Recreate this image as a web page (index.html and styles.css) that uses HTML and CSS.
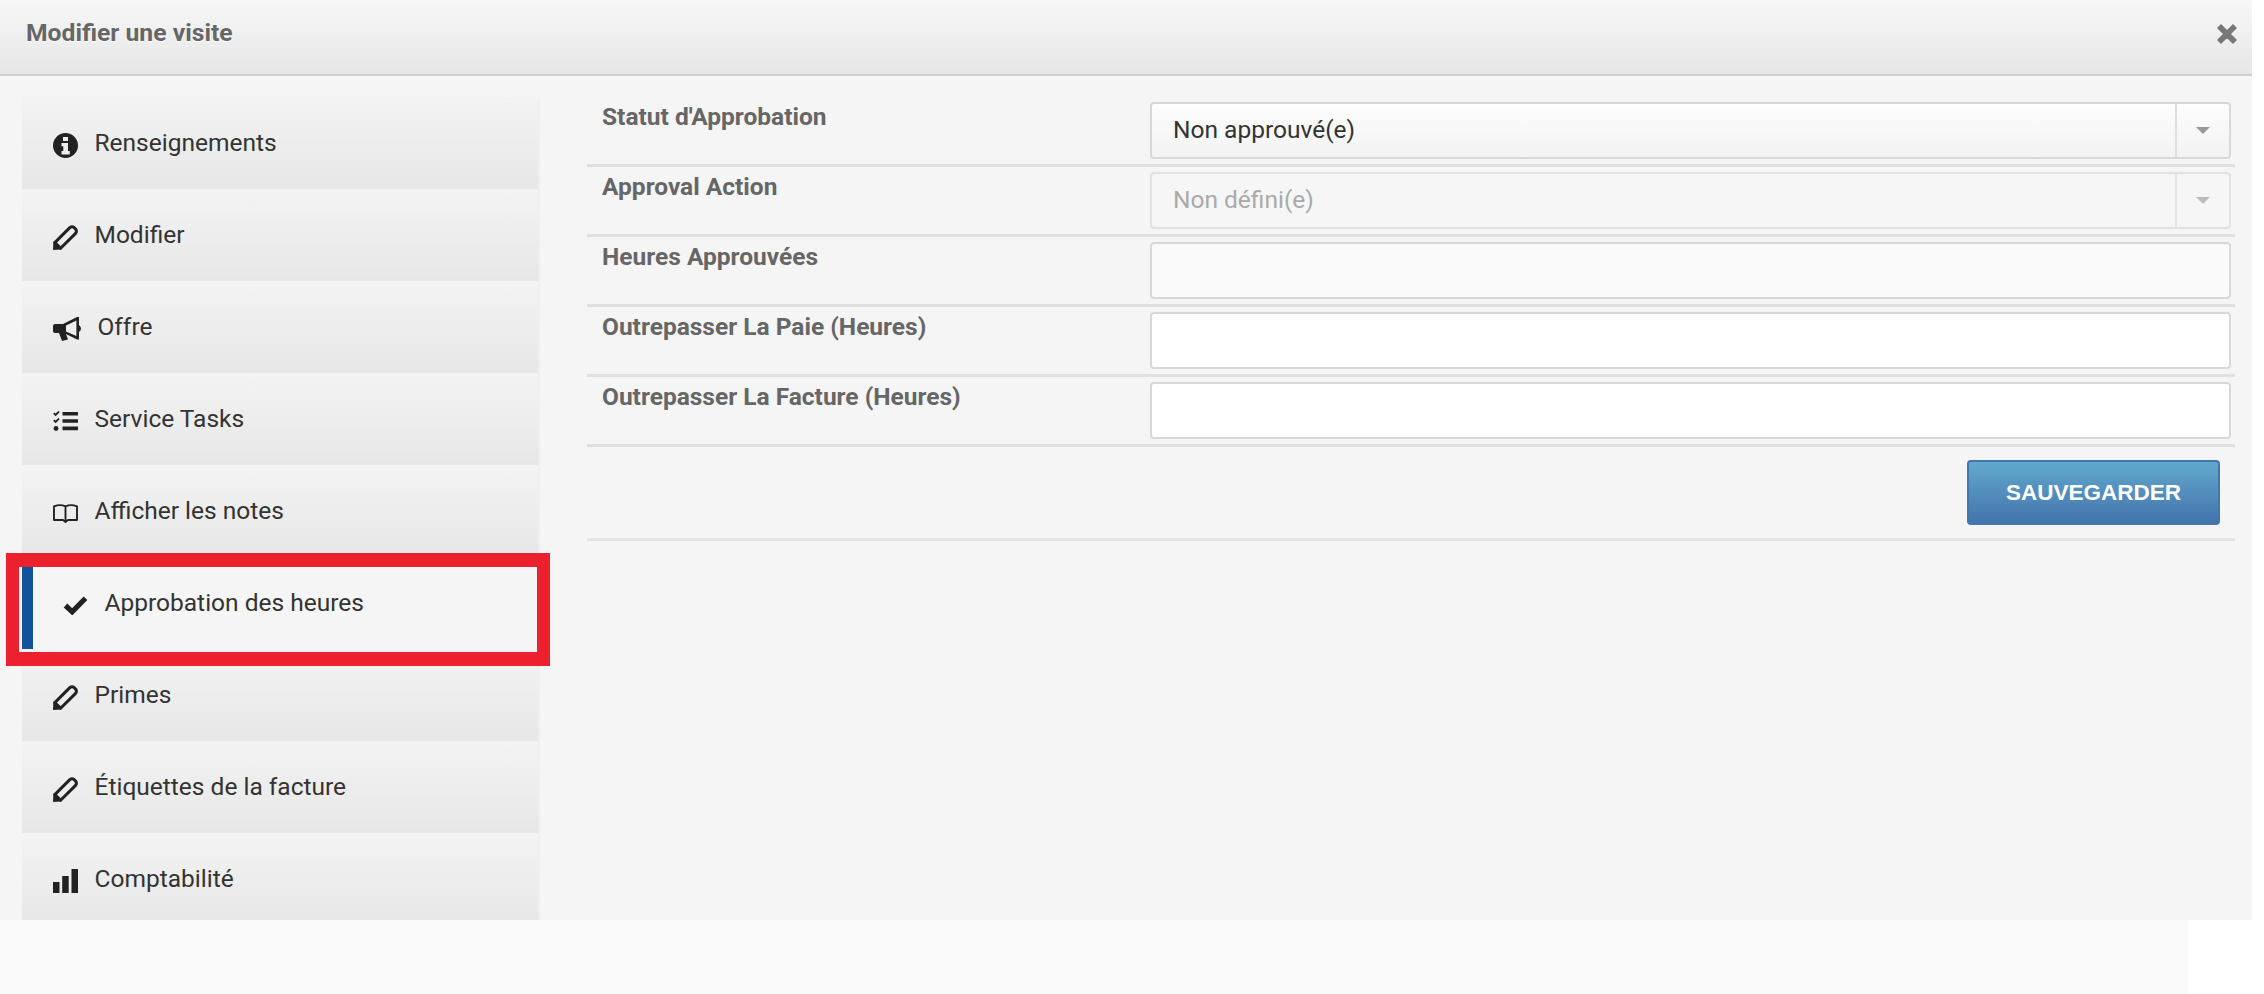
FILE: index.html
```html
<!DOCTYPE html>
<html lang="fr">
<head>
<meta charset="utf-8">
<title>Modifier une visite</title>
<link rel="stylesheet" href="styles.css">
</head>
<body>
<svg class="defs" width="0" height="0" aria-hidden="true">
  <symbol id="pencil" viewBox="0 0 25 25">
    <path d="M1.8 17.6 L16.8 2.6 Q19 .9 21.2 2.6 L22.6 4 Q24.2 6.2 22.6 8.4 L7.6 23.2 Z" fill="none" stroke="#222" stroke-width="3" stroke-linejoin="round"/>
    <path d="M0 25 L0.4 16.5 L8.6 24.4 Z" fill="#222"/>
  </symbol>
</svg>
<div class="modal">
  <header class="modal-head">
    <h1 class="modal-title">Modifier une visite</h1>
    <svg class="close" width="20" height="20" viewBox="0 0 20 20"><path d="M4 1 L10 7 L16 1 L19 4 L13 10 L19 16 L16 19 L10 13 L4 19 L1 16 L7 10 L1 4 Z" fill="#777" stroke="#777" stroke-width="1.5" stroke-linejoin="round"/></svg>
  </header>
  <div class="modal-body">
    <nav class="side">
      <a class="item">
        <svg class="ico" width="25" height="25" viewBox="0 0 25 25"><path fill-rule="evenodd" d="M12.5 0a12.5 12.5 0 1 0 0 25a12.5 12.5 0 1 0 0-25Z M10 4h5v4H10Z M8.5 10h6.5v8h1.8v3.5H8.5V18h1.8v-4.8H8.5Z" fill="#222"/></svg>
        <span>Renseignements</span>
      </a>
      <a class="item">
        <svg class="ico" width="25" height="25"><use href="#pencil"/></svg>
        <span>Modifier</span>
      </a>
      <a class="item">
        <svg class="ico" width="28" height="24" viewBox="0 0 28 24"><path d="M0 9 Q0 7 2 7 H10 L24 0 H26 V8 Q28 9.5 28 11.5 Q28 13.5 26 15 V22.5 H24 L13 17 L15 22.5 L9 24 L6 16 H2 Q0 16 0 14 Z" fill="#222"/><path d="M13 8.6 L23.4 3.6 V19 L13 14.4 Z" fill="#eee"/></svg>
        <span>Offre</span>
      </a>
      <a class="item">
        <svg class="ico" width="25" height="20" viewBox="0 0 25 20"><path d="M.8 2.2 L2.6 4 L6 .6 M.8 9.2 L2.6 11 L6 7.6" fill="none" stroke="#222" stroke-width="1.8"/><circle cx="3" cy="17.5" r="2.4" fill="#222"/><path d="M9.5 1h15.5v3.6H9.5Z M9.5 8.2h15.5v3.6H9.5Z M9.5 15.6h15.5v3.6H9.5Z" fill="#222"/></svg>
        <span>Service Tasks</span>
      </a>
      <a class="item">
        <svg class="ico" width="25" height="19" viewBox="0 0 25 19"><path d="M1 16 V2.4 Q7 -.2 12.5 2.4 Q18 -.2 24 2.4 V16 H15 L12.5 18 L10 16 Z M12.5 2.4 V17.5" fill="none" stroke="#222" stroke-width="1.9" stroke-linejoin="round"/></svg>
        <span>Afficher les notes</span>
      </a>
      <a class="item item-active">
        <svg class="ico" width="25" height="19" viewBox="0 0 25 19"><path d="M2.5 9.5 L9.2 15.8 L22.5 2.2" fill="none" stroke="#222" stroke-width="5.2"/></svg>
        <span>Approbation des heures</span>
      </a>
      <a class="item">
        <svg class="ico" width="25" height="25"><use href="#pencil"/></svg>
        <span>Primes</span>
      </a>
      <a class="item">
        <svg class="ico" width="25" height="25"><use href="#pencil"/></svg>
        <span>Étiquettes de la facture</span>
      </a>
      <a class="item">
        <svg class="ico" width="25" height="24" viewBox="0 0 25 24"><path d="M0 13h6.5v11H0Z M9.2 7h6.5v17H9.2Z M18.5 0h6.5v24h-6.5Z" fill="#222"/></svg>
        <span>Comptabilité</span>
      </a>
    </nav>
    <form class="form">
      <div class="row">
        <label class="label">Statut d'Approbation</label>
        <div class="select"><span class="select-value">Non approuvé(e)</span><span class="select-btn"><i class="caret"></i></span></div>
      </div>
      <div class="row">
        <label class="label">Approval Action</label>
        <div class="select select-off"><span class="select-value">Non défini(e)</span><span class="select-btn"><i class="caret"></i></span></div>
      </div>
      <div class="row">
        <label class="label">Heures Approuvées</label>
        <div class="field field-off"></div>
      </div>
      <div class="row">
        <label class="label">Outrepasser La Paie (Heures)</label>
        <div class="field"></div>
      </div>
      <div class="row">
        <label class="label">Outrepasser La Facture (Heures)</label>
        <div class="field"></div>
      </div>
      <div class="actions">
        <button class="save" type="button">SAUVEGARDER</button>
      </div>
    </form>
  </div>
</div>
<div class="below"></div>
<div class="highlight"></div>
</body>
</html>
```
FILE: styles.css
```css
html, body {
  margin: 0;
  padding: 0;
  background: #fff;
}
body {
  position: relative;
  width: 2264px;
  height: 994px;
  overflow: hidden;
  font-family: Roboto, "Liberation Sans", sans-serif;
}
.defs {
  position: absolute;
}
.modal {
  width: 2252px;
  height: 920px;
  background: #f5f5f5;
  display: flex;
  flex-direction: column;
  overflow: hidden;
}
.modal-head {
  box-sizing: border-box;
  height: 76px;
  flex: none;
  display: flex;
  align-items: center;
  justify-content: space-between;
  padding: 0 15px 8px 26px;
  background: linear-gradient(#f7f7f7, #e6e6e6);
  border-bottom: 2px solid #cfcfcf;
}
.modal-title {
  margin: 0;
  font-size: 24.7px;
  line-height: 30px;
  font-weight: 700;
  color: #666;
  text-shadow: 0 1px 0 #fff;
}
.close {
  flex: none;
  margin-top: 2px;
}
.modal-body {
  flex: 1;
  min-height: 0;
  display: flex;
  padding: 21px 17px 0 22px;
  gap: 47px;
  overflow: hidden;
}
.side {
  width: 516px;
  flex: none;
  display: flex;
  flex-direction: column;
  border-right: 2px solid #efefef;
}
.item {
  box-sizing: border-box;
  height: 92px;
  flex: none;
  display: flex;
  align-items: center;
  gap: 16.5px;
  padding: 0 0 2px 31px;
  background: linear-gradient(#f3f3f3, #e7e7e7);
  font-size: 24.5px;
  color: #333;
}
.item-active {
  padding-left: 30px;
  border-left: 11px solid #14519b;
  background: #f5f5f5;
}
.ico {
  flex: none;
  margin-top: 6px;
}
.form {
  flex: 1;
  min-width: 0;
  display: flex;
  flex-direction: column;
}
.row {
  box-sizing: border-box;
  height: 70px;
  flex: none;
  display: grid;
  grid-template-columns: 563px 1fr;
  padding: 5px 4px 5px 0;
  border-bottom: 3px solid #e0e0e0;
}
.label {
  padding: 1px 0 0 15px;
  font-size: 24.5px;
  line-height: 28px;
  font-weight: 700;
  color: #666;
}
.select, .field {
  box-sizing: border-box;
  height: 57px;
  display: flex;
  border: 2px solid #d8d8d8;
  border-radius: 4px;
  background: #fff;
}
.select {
  background: linear-gradient(#fdfdfd, #f3f3f3);
}
.select-value {
  flex: 1;
  padding-left: 21px;
  font-size: 24.5px;
  line-height: 51px;
  color: #333;
}
.select-btn {
  width: 52px;
  flex: none;
  display: flex;
  align-items: center;
  justify-content: center;
  border-left: 2px solid #dedede;
}
.caret {
  width: 0;
  height: 0;
  border-left: 7px solid transparent;
  border-right: 7px solid transparent;
  border-top: 7px solid #999;
}
.select-off {
  border-color: #e2e2e2;
  background: #f6f6f6;
}
.select-off .select-value {
  color: #aaa;
}
.select-off .select-btn {
  border-left-color: #e6e6e6;
}
.select-off .caret {
  border-top-color: #bbb;
}
.field-off {
  background: #fafafa;
}
.actions {
  box-sizing: border-box;
  height: 94px;
  flex: none;
  display: flex;
  justify-content: flex-end;
  padding: 13px 15px 0 0;
  border-bottom: 3px solid #e4e4e4;
}
.save {
  box-sizing: border-box;
  width: 253px;
  height: 65px;
  padding: 0;
  border: 2px solid #4476ae;
  border-radius: 4px;
  background: linear-gradient(#62a8cd, #4374ac);
  color: #fff;
  font-family: "Liberation Sans", sans-serif;
  font-size: 22.5px;
  font-weight: 700;
}
.below {
  width: 2188px;
  height: 74px;
  background: #f9f9f9;
}
.highlight {
  position: absolute;
  left: 6px;
  top: 553px;
  width: 518px;
  height: 85px;
  border: solid #ed2030;
  border-width: 14px 13px;
}
```
